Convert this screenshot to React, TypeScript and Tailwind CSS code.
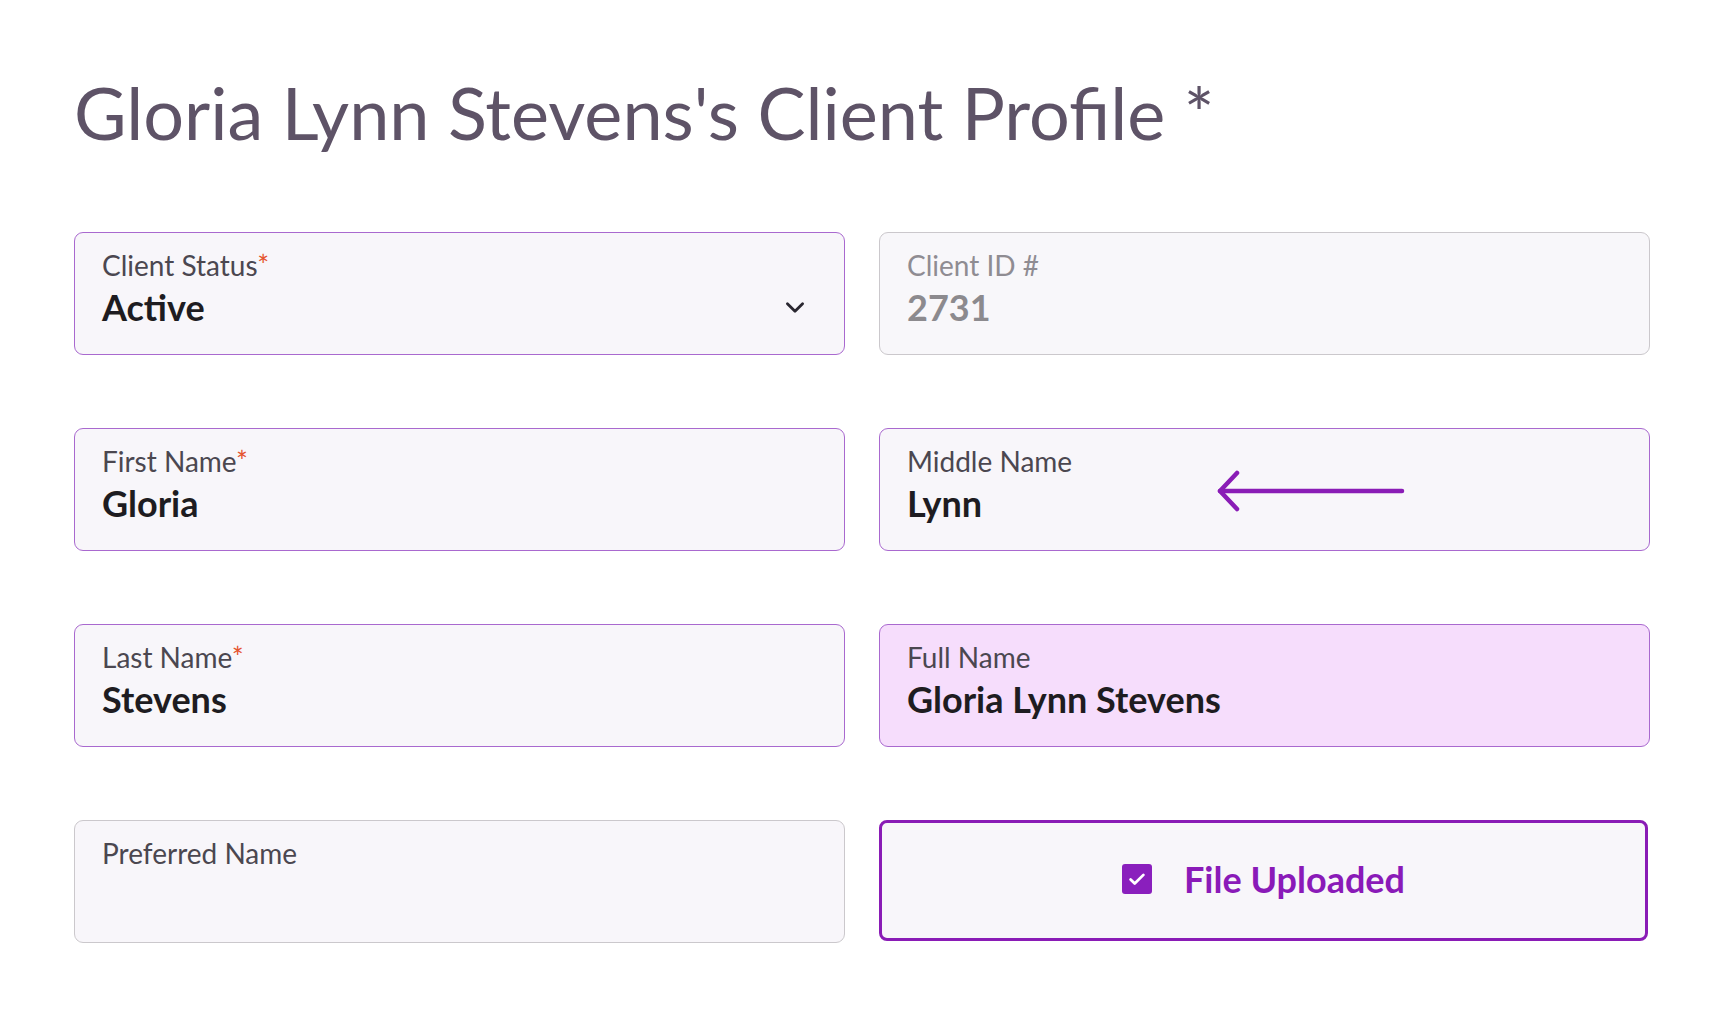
import React from "react";

const font = { fontFamily: "Lato, 'Noto Sans', sans-serif" };

function Field({
  label,
  value,
  required,
  variant = "purple",
  chevron,
  children,
}: {
  label: string;
  value?: string;
  required?: boolean;
  variant?: "purple" | "gray" | "filled" | "plain";
  chevron?: boolean;
  children?: React.ReactNode;
}) {
  const box =
    variant === "gray"
      ? "border-[#cbc8cc] bg-[#f8f7fa]"
      : variant === "plain"
      ? "border-[#cbc8cc] bg-[#f8f6fa]"
      : variant === "filled"
      ? "border-[#a969cf] bg-[#f6ddfc]"
      : "border-[#a969cf] bg-[#f8f6fa]";
  const labelColor = variant === "gray" ? "text-[#8f8c92]" : "text-[#4b4750]";
  const valueColor = variant === "gray" ? "text-[#8c8a8e]" : "text-[#1e1c21]";
  return (
    <div
      className={`relative h-[123px] rounded-[9px] border-[1.5px] ${box} pl-[27px] pr-[36px] pt-[15px] flex flex-col`}
    >
      <div className={`text-[28px] leading-[34px] ${labelColor}`}>
        {label}
        {required && <span className="text-[#e5532e]">*</span>}
      </div>
      <div className="mt-[3px] flex items-center justify-between">
        <div className={`text-[36px] leading-[44px] font-bold ${valueColor}`}>
          {value ?? "\u00a0"}
        </div>
        {chevron && (
          <svg width="26" height="26" viewBox="0 0 24 24" fill="none" stroke="#2a2730" strokeWidth="2.6" strokeLinecap="round" strokeLinejoin="round">
            <path d="M5 9l7 7 7-7" />
          </svg>
        )}
      </div>
      {children}
    </div>
  );
}

export default function App() {
  return (
    <div className="min-h-screen bg-white pl-[74px] pr-[67px] pt-[76px]" style={font}>
      <h1 className="text-[72px] leading-none font-normal text-[#5e5367]">
        Gloria Lynn Stevens's Client Profile *
      </h1>
      <div className="mt-[84px] grid grid-cols-2 gap-x-[34px] gap-y-[73px]">
        <Field label="Client Status" value="Active" required chevron />
        <Field label="Client ID #" value="2731" variant="gray" />
        <Field label="First Name" value="Gloria" required />
        <Field label="Middle Name" value="Lynn">
          <svg
            className="absolute left-[336px] top-[40px]"
            width="190"
            height="44"
            viewBox="0 0 190 44"
            fill="none"
            stroke="#8a1cb6"
            strokeWidth="4.5"
            strokeLinecap="round"
            strokeLinejoin="round"
          >
            <path d="M4 22H186" />
            <path d="M21 4L4 22L21 40" />
          </svg>
        </Field>
        <Field label="Last Name" value="Stevens" required />
        <Field label="Full Name" value="Gloria Lynn Stevens" variant="filled" />
        <Field label="Preferred Name" variant="plain" />
        <div className="h-[121px] mr-[2px] rounded-[8px] border-[3px] border-[#8a1cb6] bg-[#f8f6fa] flex items-center justify-center gap-[32px] pb-[4px]">
          <div className="w-[30px] h-[30px] rounded-[3px] bg-[#8a1fbd] flex items-center justify-center">
            <svg width="22" height="22" viewBox="0 0 24 24" fill="none" stroke="white" strokeWidth="3" strokeLinecap="round" strokeLinejoin="round">
              <path d="M5 12.5l4.5 4.5L19 7.5" />
            </svg>
          </div>
          <span className="text-[36px] leading-none font-bold text-[#8a1ab8]">File Uploaded</span>
        </div>
      </div>
    </div>
  );
}
